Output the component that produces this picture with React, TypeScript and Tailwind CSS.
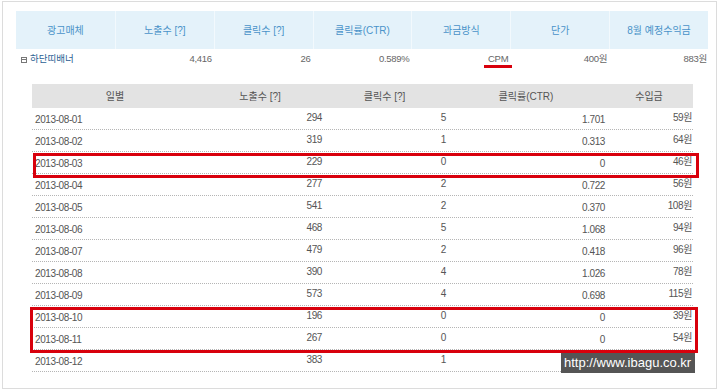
import React from 'react'

const font = { fontFamily: '"Liberation Sans", "Noto Sans CJK KR", sans-serif' }

const summaryHead = ['광고매체', '노출수 [?]', '클릭수 [?]', '클릭률(CTR)', '과금방식', '단가', '8월 예정수익금']

// 마지막 줄 클릭률/수입금은 워터마크에 가려져 있음
const daily = [
  ['2013-08-01', '294', '5', '1.701', '59원'],
  ['2013-08-02', '319', '1', '0.313', '64원'],
  ['2013-08-03', '229', '0', '0', '46원'],
  ['2013-08-04', '277', '2', '0.722', '56원'],
  ['2013-08-05', '541', '2', '0.370', '108원'],
  ['2013-08-06', '468', '5', '1.068', '94원'],
  ['2013-08-07', '479', '2', '0.418', '96원'],
  ['2013-08-08', '390', '4', '1.026', '78원'],
  ['2013-08-09', '573', '4', '0.698', '115원'],
  ['2013-08-10', '196', '0', '0', '39원'],
  ['2013-08-11', '267', '0', '0', '54원'],
  ['2013-08-12', '383', '1', '', ''],
]

// 일별 표 칸 너비
const cols = 'grid grid-cols-[166px_124px_125px_158px_88px]'

export default function App() {
  return (
    <div className="w-[720px] h-[390px] bg-white overflow-hidden" style={font}>
      <div className="relative mt-[1px] ml-[2px] w-[715px] h-[388px] border border-[#dcdcdc] pt-[9px] pl-[13px]">
        {/* 광고 요약 */}
        <div className="w-[692px]">
          <div className="grid grid-cols-7 h-[38px] bg-[#e4f2fa]">
            {summaryHead.map((h, i) => (
              <div
                key={h}
                className={`flex items-center justify-center text-[10px] text-[#4a93c9] ${i > 0 ? 'border-l border-[#f2f9fd]' : ''}`}
              >
                {h}
              </div>
            ))}
          </div>
          <div className="grid grid-cols-7 h-[21px] text-[9.5px] text-[#666] tracking-[-0.3px]">
            <div className="flex items-center gap-[3px] pl-[5px]">
              <span className="w-[6px] h-[6px] border border-[#777] flex items-center justify-center">
                <span className="w-[4px] h-px bg-[#777]" />
              </span>
              <span className="text-[#2c5f94] tracking-normal">하단띠배너</span>
            </div>
            <div className="flex items-center justify-end pr-[2px]">4,416</div>
            <div className="flex items-center justify-end pr-[2px]">26</div>
            <div className="flex items-center justify-end pr-[2px]">0.589%</div>
            <div className="flex items-center justify-end pr-[2px]">
              <span className="relative">
                CPM
                <span className="absolute left-[-4px] right-[-4px] top-[13px] h-[3px] bg-[#d8000c]" />
              </span>
            </div>
            <div className="flex items-center justify-end pr-[2px]">400원</div>
            <div className="flex items-center justify-end pr-[1px]">883원</div>
          </div>
        </div>

        {/* 일별 */}
        <div className="mt-[14px] ml-[16px] w-[661px]">
          <div className={`${cols} h-[24px] bg-[#e3e3e3] text-[10px] text-[#555]`}>
            <div className="flex items-center justify-center">일별</div>
            <div className="flex items-center justify-center">노출수 [?]</div>
            <div className="flex items-center justify-center">클릭수 [?]</div>
            <div className="flex items-center justify-center">클릭률(CTR)</div>
            <div className="flex items-center justify-center">수입금</div>
          </div>
          {daily.map(r => (
            <div
              key={r[0]}
              className={`${cols} h-[22px] border-b border-dotted border-[#b5b5b5] text-[10px] text-[#555] tracking-[-0.4px]`}
            >
              <div className="flex items-center pl-[3px] pt-[2px]">{r[0]}</div>
              <div className="flex items-center justify-end pb-[2px]">{r[1]}</div>
              <div className="flex items-center justify-end pb-[2px] pr-[1px]">{r[2]}</div>
              <div className="flex items-center justify-end pt-[1px]">{r[3]}</div>
              <div className="flex items-center justify-end pb-[2px] pr-[1px]">{r[4]}</div>
            </div>
          ))}
        </div>

        {/* 빨간 표시 */}
        <div className="absolute left-[30px] top-[151px] w-[666px] h-[25px] border-[3px] border-[#d8000c]" />
        <div className="absolute left-[27px] top-[305px] w-[668px] h-[46px] border-[3px] border-[#d8000c]" />

        {/* 워터마크 */}
        <div className="absolute left-[558px] top-[351px] w-[134px] h-[20px] bg-[#555] text-white text-[13px] leading-[20px] pl-[3px] whitespace-nowrap">
          http://www.ibagu.co.kr
        </div>
      </div>
    </div>
  )
}
